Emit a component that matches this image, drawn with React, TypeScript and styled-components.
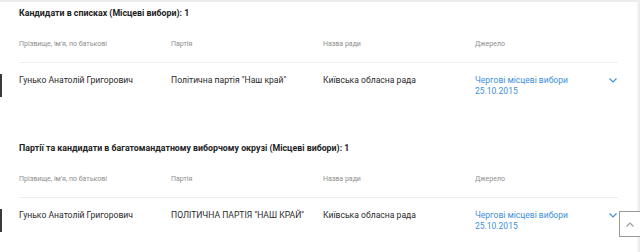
import React from "react";
import styled, { createGlobalStyle } from "styled-components";

const Global = createGlobalStyle`
  html, body { margin: 0; padding: 0; background: #fff; }
  body { font-family: Roboto, "Noto Sans", Arial, sans-serif; -webkit-font-smoothing: antialiased; }
`;

const Page = styled.div`
  position: relative;
  width: 640px;
  height: 252px;
  overflow: hidden;
  display: flex;
  background: #fff;
`;

const Content = styled.main`
  flex: 1;
  border-top: 2px solid #ececec;
`;

const Edge = styled.div`
  width: 3px;
  background: linear-gradient(to right, #f7f7f7, #e9e9e9);
`;

const Section = styled.section`
  height: 135px;
`;

const Title = styled.h2`
  margin: 0;
  padding-left: 19px;
  height: 22px;
  line-height: 22px;
  font-size: 8.8px;
  font-weight: 700;
  color: #222;
`;

const Columns = styled.div`
  display: grid;
  grid-template-columns: 152px 152px 152px 1fr 10px;
`;

const Head = styled(Columns)`
  margin-left: 19px;
  width: 599px;
  padding: 14px 0 12px;
  border-bottom: 1px solid #eeeeee;
`;

const HeadCell = styled.div`
  font-size: 7px;
  line-height: 12px;
  color: #8e8e8e;
`;

const Row = styled.div`
  display: flex;
  align-items: flex-start;
  padding-top: 11px;
`;

const Marker = styled.div`
  width: 2px;
  height: 23px;
  margin-right: 17px;
  background: #3a3a3a;
`;

const RowCells = styled(Columns)`
  width: 599px;
`;

const Cell = styled.div`
  font-size: 8.6px;
  line-height: 11px;
  padding-top: 0.5px;
  color: #2a2a2a;
`;

const Link = styled.a`
  font-size: 8.5px;
  line-height: 11px;
  padding-top: 0.5px;
  color: #3d8fd9;
  text-decoration: none;
`;

const Toggle = styled.div`
  display: flex;
  justify-content: center;
  padding-top: 4px;
`;

const ToTop = styled.button`
  position: absolute;
  left: 619px;
  top: 211px;
  width: 22px;
  height: 26px;
  padding: 0;
  border: 1px solid #9a9a9a;
  background: #fff;
  display: flex;
  align-items: center;
  justify-content: center;
`;

const Chevron = ({ up, color }: { up?: boolean; color: string }) => (
  <svg width="8" height="5" viewBox="0 0 8 5">
    <path
      d={up ? "M0.5 4.5 L4 1 L7.5 4.5" : "M0.5 0.5 L4 4 L7.5 0.5"}
      fill="none"
      stroke={color}
      strokeWidth="1.1"
    />
  </svg>
);

type Entry = {
  title: string;
  name: string;
  party: string;
  council: string;
  source: [string, string];
};

const entries: Entry[] = [
  {
    title: "Кандидати в списках (Місцеві вибори): 1",
    name: "Гунько Анатолій Григорович",
    party: "Політична партія \"Наш край\"",
    council: "Київська обласна рада",
    source: ["Чергові місцеві вибори", "25.10.2015"],
  },
  {
    title: "Партії та кандидати в багатомандатному виборчому окрузі (Місцеві вибори): 1",
    name: "Гунько Анатолій Григорович",
    party: "ПОЛІТИЧНА ПАРТІЯ \"НАШ КРАЙ\"",
    council: "Київська обласна рада",
    source: ["Чергові місцеві вибори", "25.10.2015"],
  },
];

export default function App() {
  return (
    <>
      <Global />
      <Page>
        <Content>
          {entries.map((e, i) => (
            <Section key={i}>
              <Title>{e.title}</Title>
              <Head>
                <HeadCell>Прізвище, ім'я, по батькові</HeadCell>
                <HeadCell>Партія</HeadCell>
                <HeadCell>Назва ради</HeadCell>
                <HeadCell>Джерело</HeadCell>
                <span />
              </Head>
              <Row>
                <Marker />
                <RowCells>
                  <Cell>{e.name}</Cell>
                  <Cell>{e.party}</Cell>
                  <Cell>{e.council}</Cell>
                  <Link href="#">
                    {e.source[0]}
                    <br />
                    {e.source[1]}
                  </Link>
                  <Toggle>
                    <Chevron color="#3d8fd9" />
                  </Toggle>
                </RowCells>
              </Row>
            </Section>
          ))}
        </Content>
        <Edge />
        <ToTop aria-label="Вгору">
          <Chevron up color="#9a9a9a" />
        </ToTop>
      </Page>
    </>
  );
}
